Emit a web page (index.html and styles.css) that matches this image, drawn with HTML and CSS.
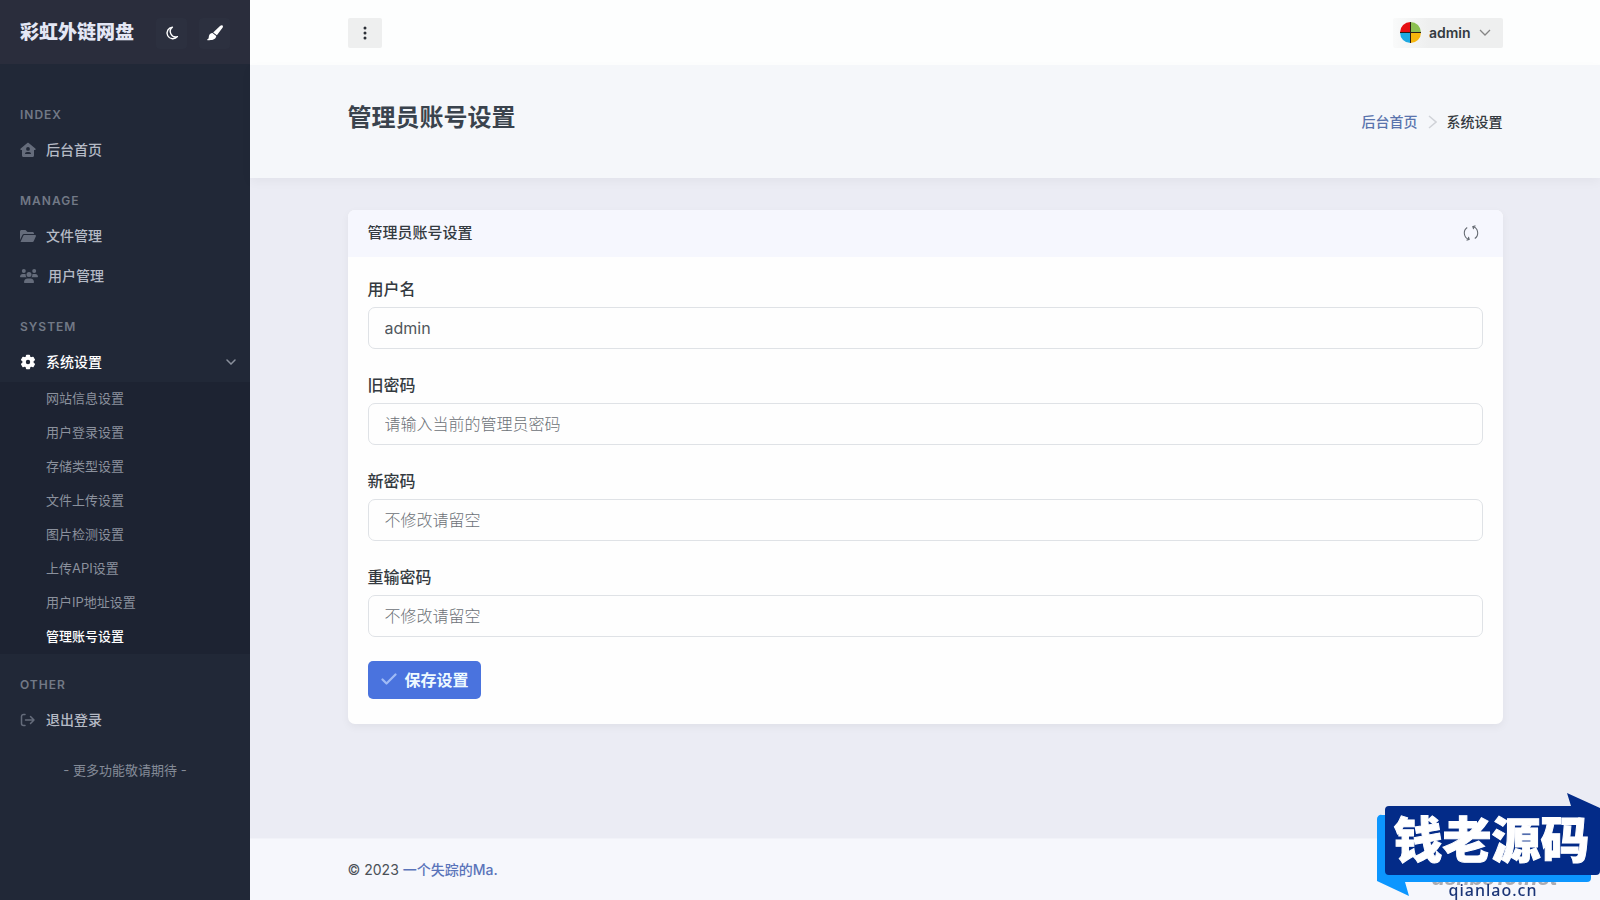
FILE: index.html
```html
<!DOCTYPE html>
<html lang="zh-CN">
<head>
    <meta charset="UTF-8">
    <meta name="viewport" content="width=device-width, initial-scale=1.0">
    <title>管理员账号设置</title>
    <link rel="stylesheet" href="styles.css">
</head>
<body>
    <div class="page">
        <!-- Sidebar -->
        <aside class="sidebar">
            <div class="sidebar-header">
                <a class="brand" href="#">彩虹外链网盘</a>
                <button type="button" class="side-btn" aria-label="深色模式">
                    <svg width="14" height="14" viewBox="0 0 14 14"><path d="M7.4 1.2A5.8 5.8 0 1 0 12.4 10.6A5.4 5.4 0 0 1 7.4 1.2Z" fill="none" stroke="#fff" stroke-width="1.4" stroke-linejoin="round"/></svg>
                </button>
                <button type="button" class="side-btn" aria-label="主题颜色">
                    <svg width="16" height="16" viewBox="0 0 16 16" fill="#fff"><path d="M15.5.5c.7.7.5 1.5 0 2.300L9.900 10.300 6.200 7.400 13 1.100C13.900.3 14.800-.1 15.500.5zM5.500 8.100 9.200 11.100C9 14.200 6.200 15.600.5 15.200 0 15.100 0 14.500.5 14.300 2.100 13.600 1.500 12.300 2 10.700 2.600 9 4 8 5.500 8.100z"/></svg>
                </button>
            </div>
            <nav class="nav">
                <div class="nav-heading">Index</div>
                <a class="nav-link" href="#">
                    <svg width="16" height="16" viewBox="0 0 16 16"><path fill-rule="evenodd" d="M8 .8c.3 0 .5.1.7.300L15.300 6.500c.8.7.4 1.500-.4 1.500H14v5.500c0 .9-.6 1.500-1.500 1.500h-9C2.600 15 2 14.400 2 13.500V8h-.9C.3 8-.1 7.200.7 6.500L7.300 1.100C7.500.9 7.700.8 8 .8zM8 5a1.900 1.900 0 1 0 0 3.800A1.900 1.900 0 0 0 8 5zM7 10c-1.200 0-2 .8-2 2h6c0-1.200-.8-2-2-2z"/></svg>
                    <span>后台首页</span>
                </a>

                <div class="nav-heading">Manage</div>
                <a class="nav-link" href="#">
                    <svg width="16" height="16" viewBox="0 0 16 16"><path d="M0 12V3.500C0 2.700.7 2 1.500 2h4l2 2h5c.8 0 1.500.7 1.500 1.500V6H4C3.300 6 2.700 6.400 2.400 7zM.5 14 3.300 7.700C3.500 7.300 3.800 7 4.300 7H15c.8 0 1.200.6.9 1.300l-2.200 5c-.2.4-.6.7-1.100.7z"/></svg>
                    <span>文件管理</span>
                </a>
                <a class="nav-link" href="#">
                    <svg width="18" height="16" viewBox="0 0 18 16"><circle cx="3.800" cy="3" r="2"/><circle cx="14.200" cy="3" r="2"/><circle cx="9" cy="6.500" r="2.500"/><path d="M0 8.800C0 7.100 1.200 6 2.600 6h1.800c.5 0 .9.1 1.300.300C5.500 7.500 6 8.600 6.700 9.300H.6C.2 9.300 0 9.100 0 8.800zM18 8.800C18 7.100 16.800 6 15.400 6h-1.800c-.5 0-.9.1-1.300.300.2 1.200-.3 2.300-1 3h6.100c.4 0 .6-.2.6-.5zM4 14.300C4 12.100 5.500 10.500 7.500 10.500h3c2 0 3.500 1.600 3.500 3.800 0 .4-.3.7-.7.7H4.700c-.4 0-.7-.3-.7-.7z"/></svg>
                    <span>用户管理</span>
                </a>

                <div class="nav-heading">System</div>
                <a class="nav-link active" href="#">
                    <svg width="16" height="16" viewBox="0 0 16 16"><path fill-rule="evenodd" d="M6.600.6h2.800l.5 2 1.100.6 2-.6 1.400 2.500-1.500 1.400v1.400l1.500 1.500-1.400 2.500-2-.6-1.100.7-.5 2H6.600l-.5-2L5 11.300l-2 .6L1.600 9.400 3.100 7.900V6.500L1.600 5.100 3 2.600l2 .6 1.100-.6z" transform="translate(0 .7)" stroke="#fff" stroke-width="1.200" stroke-linejoin="round"/><circle cx="8" cy="8" r="2.200" fill="#212837"/></svg>
                    <span>系统设置</span>
                    <svg class="nav-arrow" width="10" height="6" viewBox="0 0 10 6"><path d="M1 1l4 4 4-4" fill="none" stroke="#8a909c" stroke-width="1.500" stroke-linecap="round"/></svg>
                </a>
                <ul class="submenu">
                    <li><a href="#">网站信息设置</a></li>
                    <li><a href="#">用户登录设置</a></li>
                    <li><a href="#">存储类型设置</a></li>
                    <li><a href="#">文件上传设置</a></li>
                    <li><a href="#">图片检测设置</a></li>
                    <li><a href="#">上传API设置</a></li>
                    <li><a href="#">用户IP地址设置</a></li>
                    <li><a class="active" href="#">管理账号设置</a></li>
                </ul>

                <div class="nav-heading">Other</div>
                <a class="nav-link" href="#">
                    <svg class="line-icon" width="16" height="16" viewBox="0 0 16 16"><path d="M5 2.500H3.500a2 2 0 0 0-2 2v7a2 2 0 0 0 2 2H5M5.500 8H14M10.500 4.500 14 8l-3.500 3.500"/></svg>
                    <span>退出登录</span>
                </a>
                <p class="nav-note">- 更多功能敬请期待 -</p>
            </nav>
        </aside>

        <div class="main">
            <!-- Header -->
            <header class="topbar">
                <div class="wrap topbar-row">
                    <button type="button" class="top-btn" aria-label="菜单">
                        <svg width="4" height="14" viewBox="0 0 4 14" fill="#2b2f36"><circle cx="2" cy="2" r="1.500"/><circle cx="2" cy="7" r="1.500"/><circle cx="2" cy="12" r="1.500"/></svg>
                    </button>
                    <button type="button" class="top-btn user-btn">
                        <svg width="21" height="21" viewBox="0 0 21 21">
                            <path d="M10.500 10.500V0A10.500 10.500 0 0 0 0 10.500z" fill="#e60f12"/>
                            <path d="M10.500 10.500H21A10.500 10.500 0 0 0 10.500 0z" fill="#8cc152"/>
                            <path d="M10.500 10.500H0A10.500 10.500 0 0 0 10.500 21z" fill="#1fa9e1"/>
                            <path d="M10.500 10.500V21A10.500 10.500 0 0 0 21 10.500z" fill="#f6b60d"/>
                            <path d="M10.500 0v21M0 10.500h21" stroke="#2b1d16" stroke-width="1"/>
                        </svg>
                        <span>admin</span>
                        <svg width="12" height="7" viewBox="0 0 12 7"><path d="M1 1l5 5 5-5" fill="none" stroke="#858585" stroke-width="1.300"/></svg>
                    </button>
                </div>
            </header>

            <!-- Page title -->
            <div class="hero">
                <div class="wrap hero-row">
                    <h1>管理员账号设置</h1>
                    <nav class="breadcrumb">
                        <a href="#">后台首页</a>
                        <svg width="9" height="14" viewBox="0 0 9 14"><path d="M1 1l7 6-7 6" fill="none" stroke="#d0d3d8" stroke-width="1.500"/></svg>
                        <span>系统设置</span>
                    </nav>
                </div>
            </div>

            <!-- Account form -->
            <main class="wrap content">
                <section class="card">
                    <div class="card-header">
                        <h2>管理员账号设置</h2>
                        <button type="button" class="refresh" aria-label="刷新">
                            <svg width="16" height="16" viewBox="0 0 16 16" fill="none" stroke="#666b73" stroke-width="1.100"><path d="M6 14.400A6.700 6.700 0 0 1 4.200 2.500M10 1.600A6.700 6.700 0 0 1 11.800 13.500M3.500 15.300 6.200 14.500 5.400 11.900M12.500.7 9.800 1.500l.8 2.600"/></svg>
                        </button>
                    </div>
                    <form class="card-body">
                        <div class="field">
                            <label for="user">用户名</label>
                            <input type="text" id="user" value="admin">
                        </div>
                        <div class="field">
                            <label for="oldpwd">旧密码</label>
                            <input type="text" id="oldpwd" placeholder="请输入当前的管理员密码">
                        </div>
                        <div class="field">
                            <label for="newpwd">新密码</label>
                            <input type="text" id="newpwd" placeholder="不修改请留空">
                        </div>
                        <div class="field">
                            <label for="newpwd2">重输密码</label>
                            <input type="text" id="newpwd2" placeholder="不修改请留空">
                        </div>
                        <button type="button" class="save-btn">
                            <svg width="16" height="12" viewBox="0 0 16 12"><path d="M1.500 6.500 5.500 10.500 14.500 1.500" fill="none" stroke="#a0bbf5" stroke-width="2.200" stroke-linecap="round" stroke-linejoin="round"/></svg>
                            <span>保存设置</span>
                        </button>
                    </form>
                </section>
            </main>

            <footer class="footer">
                <div class="wrap">© 2023 <a href="#">一个失踪的Ma.</a></div>
            </footer>
        </div>
    </div>

    <!-- Site badge -->
    <div class="badge">
        <div class="badge-ghost">asnbs10.net</div>
        <svg class="badge-shape" width="223" height="106" viewBox="0 0 223 106">
            <path d="M5 21H214V84a4 4 0 0 1-4 4H28L32 102 0 87V25a4 4 0 0 1 5-4z" fill="#0c96ff"/>
            <path d="M12 12H194L190 -1 223 14V77a4 4 0 0 1-4 4H12a4 4 0 0 1-4-4V16a4 4 0 0 1 4-4z" fill="#032b88"/>
        </svg>
        <div class="badge-title">钱老源码</div>
        <div class="badge-site">qianlao.cn</div>
    </div>
</body>
</html>
```

FILE: styles.css
```css
* {
    box-sizing: border-box;
}
body {
    margin: 0;
    font-family: Inter, "Noto Sans CJK SC", sans-serif;
    font-size: 16px;
    line-height: 24px;
    color: #343a40;
    background: #ebecf4;
}
a {
    text-decoration: none;
}
button {
    border: none;
    font-family: inherit;
    cursor: pointer;
}
.page {
    display: flex;
    min-height: 100vh;
}

/* Sidebar */
.sidebar {
    flex: 0 0 250px;
    background: #212837;
}
.sidebar-header {
    display: flex;
    align-items: center;
    gap: 12px;
    height: 64px;
    padding: 2px 20px 0 20px;
    background: #2a2d3c;
}
.brand {
    flex: 1;
    font-size: 19px;
    font-weight: 800;
    color: #e4e7f5;
    white-space: nowrap;
}
.side-btn {
    display: flex;
    align-items: center;
    justify-content: center;
    width: 31px;
    height: 31px;
    padding: 0;
    border-radius: 4px;
    background: #2c303f;
}
.nav {
    padding-top: 20px;
}
.nav-heading {
    padding: 23px 20px 7px;
    font-size: 12px;
    line-height: 16px;
    font-weight: 600;
    letter-spacing: 1px;
    text-transform: uppercase;
    color: #727986;
}
.nav-link {
    display: flex;
    align-items: center;
    gap: 10px;
    padding: 10px 14px 10px 20px;
    font-size: 14px;
    line-height: 20px;
    font-weight: 500;
    color: #b5bac5;
}
.nav-link svg {
    fill: #656c7b;
}
.nav-link.active {
    color: #fff;
}
.nav-link.active svg {
    fill: #fff;
}
.nav-link .line-icon {
    fill: none;
    stroke: #656c7b;
    stroke-width: 1.5;
    stroke-linecap: round;
    stroke-linejoin: round;
}
.nav-arrow {
    margin-left: auto;
}
.submenu {
    margin: 0;
    padding: 0;
    list-style: none;
    background: #1d2332;
}
.submenu a {
    display: block;
    padding: 6px 20px 8px 46px;
    font-size: 13px;
    line-height: 20px;
    color: #8b919d;
}
.submenu a.active {
    font-weight: 500;
    color: #fff;
}
.nav-note {
    margin: 20px 0;
    text-align: center;
    font-size: 13px;
    line-height: 20px;
    color: #848b97;
}

/* Main area */
.main {
    flex: 1;
    min-width: 0;
    display: flex;
    flex-direction: column;
}
.wrap {
    width: 90%;
    margin: 0 auto;
    padding: 0 30px;
}
.topbar {
    background: #fdfefe;
}
.topbar-row {
    display: flex;
    align-items: center;
    justify-content: space-between;
    height: 65px;
}
.top-btn {
    display: flex;
    align-items: center;
    justify-content: center;
    gap: 8px;
    min-width: 34px;
    height: 30px;
    padding: 0;
    border-radius: 2px;
    background: #eeefef;
}
.user-btn {
    padding: 0 12px 0 7px;
    font-size: 14px;
    font-weight: 600;
    color: #343a40;
    background: linear-gradient(to right, #f9fafa, #eeefef 36px);
}
.hero {
    background: #f5f7fa;
    box-shadow: 0 4px 10px rgba(0, 0, 0, 0.04);
}
.hero-row {
    display: flex;
    align-items: center;
    justify-content: space-between;
    height: 113px;
}
.hero h1 {
    margin: 0 0 8px;
    font-size: 24px;
    line-height: 32px;
    font-weight: 700;
    color: #3a434d;
}
.breadcrumb {
    display: flex;
    align-items: center;
    gap: 10px;
    font-size: 14px;
    font-weight: 500;
}
.breadcrumb a {
    color: #5a74ad;
}
.content {
    flex: 1;
    padding-top: 32px;
    padding-bottom: 32px;
}
.card {
    overflow: hidden;
    border-radius: 7px;
    background: #fefefe;
    box-shadow: 0 3px 8px rgba(0, 0, 0, 0.05);
}
.card-header {
    display: flex;
    align-items: center;
    justify-content: space-between;
    height: 47px;
    padding: 0 24px 2px 20px;
    background: #f6f7fe;
}
.card-header h2 {
    margin: 0;
    font-size: 15px;
    font-weight: 500;
}
.refresh {
    display: flex;
    padding: 0;
    background: none;
}
.card-body {
    padding: 20px 20px 25px;
}
.field {
    display: flex;
    flex-direction: column;
    gap: 6px;
    margin-bottom: 24px;
}
.field label {
    font-weight: 500;
}
.field input {
    height: 42px;
    padding: 0 16px;
    border: 1px solid #dfe2e6;
    border-radius: 7px;
    background: #fefefe;
    font-family: inherit;
    font-size: 16px;
    color: #50565c;
}
.field input::placeholder {
    color: #6c7177;
    font-weight: 300;
}
.save-btn {
    display: flex;
    align-items: center;
    gap: 8px;
    height: 38px;
    padding: 0 12px 2px 13px;
    border-radius: 5px;
    background: #4a73de;
    font-size: 16px;
    font-weight: 700;
    color: #eefaff;
}
.footer {
    padding: 20px 0;
    border-top: 1px solid #f1f2f8;
    background: #f6f7fc;
    font-size: 14px;
    line-height: 21px;
    color: #4a5057;
}
.footer a {
    font-weight: 500;
    color: #5a74ba;
}

/* Badge in the bottom corner */
.badge {
    position: fixed;
    right: 0;
    bottom: 0;
    width: 223px;
    height: 106px;
}
.badge-shape {
    position: absolute;
    top: 0;
    left: 0;
    overflow: visible;
}
.badge-title,
.badge-site,
.badge-ghost {
    position: absolute;
    left: 0;
    width: 100%;
    text-align: center;
    white-space: nowrap;
}
.badge-title {
    top: 17px;
    padding-left: 6px;
    font-size: 49px;
    line-height: 60px;
    font-weight: 900;
    color: #fff;
    -webkit-text-stroke: 1px #fff;
}
.badge-site {
    bottom: 1px;
    padding-left: 9px;
    font-family: "Noto Sans", sans-serif;
    font-size: 16px;
    line-height: 18px;
    letter-spacing: 1px;
    font-weight: 500;
    color: #1b3577;
}
.badge-ghost {
    bottom: 10px;
    padding-left: 12px;
    font-size: 21px;
    line-height: 24px;
    font-weight: 700;
    font-style: italic;
    color: #a9abb2;
}
```
